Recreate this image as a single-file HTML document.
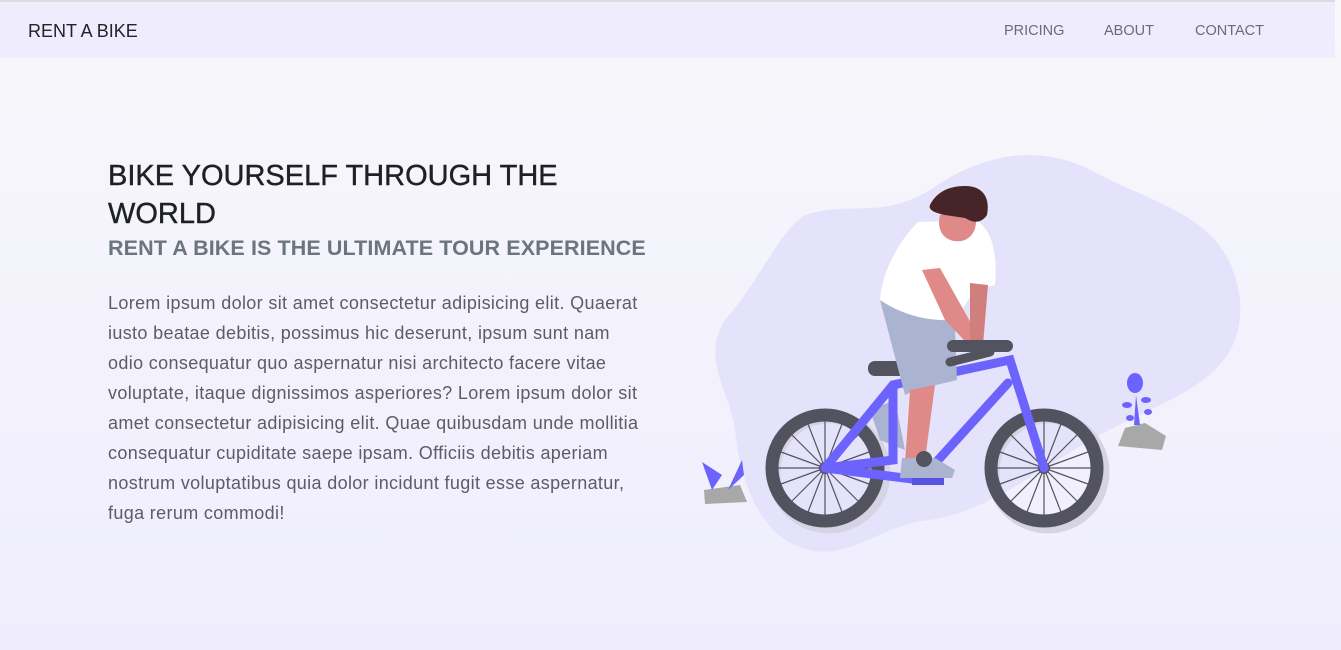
<!DOCTYPE html>
<html><head><meta charset="utf-8"><style>
*{margin:0;padding:0;box-sizing:border-box}
html,body{width:1341px;height:650px;overflow:hidden}
body{font-family:"Liberation Sans",sans-serif;background:linear-gradient(#f8f8fb,#efedfd);position:relative}
.nav{position:absolute;left:0;top:0;width:1335px;height:58px;background:#efecfd;border-top:2px solid #dcdce0}
.brand{position:absolute;left:28px;top:19px;font-size:18px;color:#212529}
.links{position:absolute;top:21px;font-size:14.5px;color:#6c6c78}
.links span{position:absolute;white-space:nowrap}
h1{position:absolute;left:108px;top:157px;font-size:29px;font-weight:normal;color:#1d2024;line-height:38px;-webkit-text-stroke:0.4px #1d2024}
h2{position:absolute;left:108px;top:236px;font-size:21.5px;font-weight:bold;color:#6c757d;white-space:nowrap;letter-spacing:0.1px}
p{position:absolute;left:108px;top:288px;font-size:18px;line-height:30px;color:#5a5d66;white-space:nowrap;letter-spacing:0.35px;font-weight:300}
svg{position:absolute;left:0;top:0}
</style></head><body>
<div class="nav"><div class="brand">RENT A BIKE</div>
<div class="links"><span style="left:1004px">PRICING</span><span style="left:1104px">ABOUT</span><span style="left:1195px">CONTACT</span></div></div>
<h1>BIKE YOURSELF THROUGH THE<br>WORLD</h1>
<h2>RENT A BIKE IS THE ULTIMATE TOUR EXPERIENCE</h2>
<p>Lorem ipsum dolor sit amet consectetur adipisicing elit. Quaerat<br>iusto beatae debitis, possimus hic deserunt, ipsum sunt nam<br>odio consequatur quo aspernatur nisi architecto facere vitae<br>voluptate, itaque dignissimos asperiores? Lorem ipsum dolor sit<br>amet consectetur adipisicing elit. Quae quibusdam unde mollitia<br>consequatur cupiditate saepe ipsam. Officiis debitis aperiam<br>nostrum voluptatibus quia dolor incidunt fugit esse aspernatur,<br>fuga rerum commodi!</p>
<svg width="1341" height="650">
<path d="M805 215 C850 200 880 220 930 190 C980 155 1040 140 1100 175 C1170 210 1230 220 1240 300 C1245 370 1190 390 1130 420 C1060 450 1000 510 930 520 C880 525 850 560 810 550 C760 540 740 480 735 430 C730 390 700 360 725 320 C760 280 780 230 805 215Z" fill="#e5e3fb"/>
<circle cx="829" cy="472" r="55" fill="none" stroke="#d6d4e4" stroke-width="13"/>
<circle cx="1048" cy="472" r="55" fill="none" stroke="#d6d4e4" stroke-width="13"/>
<circle cx="825" cy="468" r="53" fill="none" stroke="#53535f" stroke-width="13"/>
<circle cx="1044" cy="468" r="53" fill="none" stroke="#53535f" stroke-width="13"/>
<g stroke="#53535f" stroke-width="1.2">
<path d="M825 421V515M778 468H872M792 435L858 501M792 501L858 435M808 424L842 512M808 512L842 424M781 452L869 484M781 484L869 452"/>
<path d="M1044 421V515M997 468H1091M1011 435L1077 501M1011 501L1077 435M1027 424L1061 512M1027 512L1061 424M1000 452L1088 484M1000 484L1088 452"/>
</g>
<circle cx="825" cy="468" r="6" fill="#53535f"/><circle cx="1044" cy="468" r="6" fill="#53535f"/>
<path d="M870 410 L895 400 L905 450 L880 440Z" fill="#aab3cf"/>
<g stroke="#6c63ff" stroke-width="9" stroke-linecap="round" fill="none">
<path d="M825 468 L893 385 L1010 360 L1044 468"/>
<path d="M893 385 L893 460 L825 468 M825 468 L920 480 L1008 383"/>
</g>
<rect x="912" y="475" width="32" height="10" fill="#5a52e0"/>
<rect x="868" y="361" width="40" height="15" rx="7" fill="#53535f"/>
<path d="M880 300 C920 305 945 310 955 330 L957 380 L915 390 L905 395 Z" fill="#aab3cf"/>
<path d="M910 390 L935 385 L925 460 L905 462 L908 420Z" fill="#df8a88"/>
<path d="M902 458 L935 458 L955 470 L952 478 L900 478Z" fill="#aab3cf"/>
<circle cx="924" cy="459" r="8" fill="#53535f"/>
<path d="M918 222 L975 220 C995 230 997 260 995 285 L975 290 L955 320 C920 322 895 310 880 300 C882 270 900 240 918 222Z" fill="#fff"/>
<path d="M922 270 L940 268 L985 348 L978 355 L945 320Z" fill="#df8a88"/>
<path d="M970 283 L988 285 L983 345 L970 345Z" fill="#d07f7d"/>
<rect x="947" y="340" width="66" height="12" rx="6" fill="#53535f"/>
<path d="M950 362 L990 352" stroke="#53535f" stroke-width="9" stroke-linecap="round"/>
<path d="M940 215 C935 235 950 245 965 240 C975 235 978 225 975 210Z" fill="#df8a88"/>
<path d="M930 205 C935 195 945 186 965 186 C985 186 990 200 987 215 C980 225 972 222 965 218 L945 215 C935 213 928 210 930 205Z" fill="#472427"/>
<path d="M704 490 L740 485 L747 502 L705 504Z" fill="#a8a8a8"/>
<path d="M712 490 L702 462 L722 475Z M728 490 L742 460 L744 475Z" fill="#6c63ff"/>
<path d="M1125 428 L1145 423 L1166 436 L1162 450 L1118 446Z" fill="#a8a8a8"/>
<g fill="#6c63ff"><path d="M1134 425 L1136 395 L1140 425Z"/><ellipse cx="1135" cy="383" rx="8" ry="10"/><ellipse cx="1127" cy="405" rx="5" ry="3"/><ellipse cx="1146" cy="400" rx="5" ry="3"/><ellipse cx="1130" cy="418" rx="4" ry="3"/><ellipse cx="1148" cy="412" rx="4" ry="3"/></g>
</svg>
</body></html>
